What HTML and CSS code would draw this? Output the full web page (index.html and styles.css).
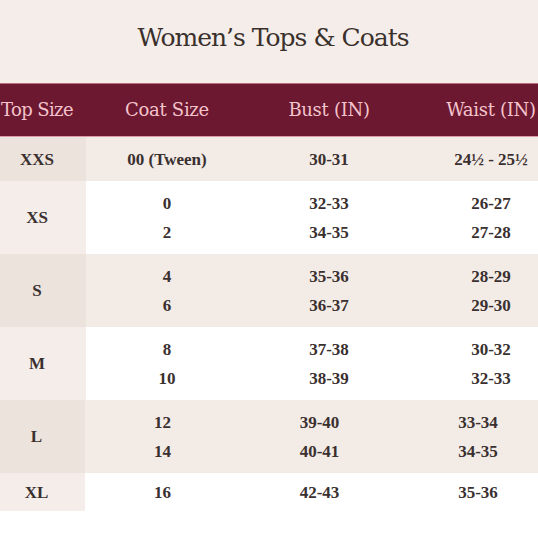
FILE: index.html
```html
<!DOCTYPE html>
<html lang="en">
<head>
<meta charset="utf-8">
<title>Women’s Tops &amp; Coats</title>
<link rel="stylesheet" href="styles.css">
</head>
<body>
<div class="frame">
<div class="sheet">
  <h1 class="title">Women’s Tops &amp; Coats</h1>
  <div class="head">
    <div class="cell c1">Top Size</div>
    <div class="cell">Coat Size</div>
    <div class="cell">Bust (IN)</div>
    <div class="cell">Waist (IN)</div>
  </div>
  <div class="row alt short">
    <div class="cell c1">XXS</div>
    <div class="cell">00 (Tween)</div>
    <div class="cell">30-31</div>
    <div class="cell">24½ - 25½</div>
  </div>
  <div class="row">
    <div class="cell c1">XS</div>
    <div class="cell"><span>0</span><span>2</span></div>
    <div class="cell"><span>32-33</span><span>34-35</span></div>
    <div class="cell"><span>26-27</span><span>27-28</span></div>
  </div>
  <div class="row alt">
    <div class="cell c1">S</div>
    <div class="cell"><span>4</span><span>6</span></div>
    <div class="cell"><span>35-36</span><span>36-37</span></div>
    <div class="cell"><span>28-29</span><span>29-30</span></div>
  </div>
  <div class="row">
    <div class="cell c1">M</div>
    <div class="cell"><span>8</span><span>10</span></div>
    <div class="cell"><span>37-38</span><span>38-39</span></div>
    <div class="cell"><span>30-32</span><span>32-33</span></div>
  </div>
  <div class="row alt shifted">
    <div class="cell c1">L</div>
    <div class="cell"><span>12</span><span>14</span></div>
    <div class="cell"><span>39-40</span><span>40-41</span></div>
    <div class="cell"><span>33-34</span><span>34-35</span></div>
  </div>
  <div class="row shifted last">
    <div class="cell c1">XL</div>
    <div class="cell">16</div>
    <div class="cell">42-43</div>
    <div class="cell">35-36</div>
  </div>
</div>
</div>
</body>
</html>
```
FILE: styles.css
```css
html, body {
  margin: 0;
  padding: 0;
  background: #ffffff;
}

body {
  font-family: "Liberation Serif", "Times New Roman", serif;
  color: #3a3030;
}

.frame {
  width: 538px;
  overflow: hidden;
}

.sheet {
  width: 572px;
}

.title {
  margin: 0;
  width: 538px;
  height: 83px;
  box-sizing: border-box;
  padding: 0 0 8px 8px;
  display: flex;
  align-items: center;
  justify-content: center;
  background: #f5ede9;
  font-family: "DejaVu Serif", serif;
  font-weight: normal;
  font-size: 25px;
  letter-spacing: -1px;
  color: #3a302c;
}

.head {
  display: grid;
  grid-template-columns: 86px 162px 162px 162px;
  height: 52px;
  align-items: center;
  background: #6b1830;
  border-top: 1px solid #b8707f;
  border-bottom: 1px solid #d99ba9;
  color: #f4c3cc;
  font-family: "DejaVu Serif", serif;
  font-size: 18px;
  letter-spacing: -0.3px;
}

.head .cell {
  padding-bottom: 2px;
  white-space: nowrap;
}

.head .c1 {
  letter-spacing: -0.6px;
}

.cell {
  display: flex;
  flex-direction: column;
  align-items: center;
  justify-content: center;
}

.c1 {
  padding-right: 12px;
}

.row {
  display: grid;
  grid-template-columns: 86px 162px 162px 162px;
  height: 73px;
  background: #ffffff;
  font-weight: bold;
  font-size: 17px;
  line-height: 29px;
}

.row .c1 {
  background: #f4ede9;
}

.row.alt {
  background: #f3ebe6;
}

.row.alt .c1 {
  background: #ece3dc;
}

.row.short {
  height: 44px;
}

.row.last {
  height: 38px;
}

.row.shifted {
  grid-template-columns: 85px 155px 159px 158px;
}
```
